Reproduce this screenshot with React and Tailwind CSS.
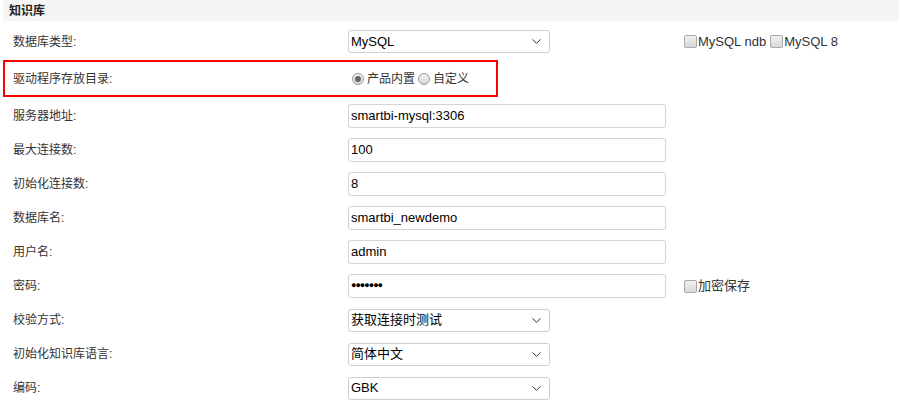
import { ChevronDown } from "lucide-react";

const font = { fontFamily: '"Liberation Sans", "Noto Sans CJK SC", Arial, sans-serif' };

function Select({ value }) {
  return (
    <div className="flex h-[23px] w-[202px] items-center justify-between rounded-[3px] border border-[#cfcfcf] bg-white pl-[2px] pr-[5px] text-[13px] text-black">
      <span>{value}</span>
      <ChevronDown size={15} strokeWidth={1.5} className="text-[#222]" />
    </div>
  );
}

function TextBox({ value }) {
  return (
    <div className="flex h-[24px] w-[318px] items-center rounded-[3px] border border-[#d4d4d4] bg-white pl-[2px] text-[13px] text-black">
      {value}
    </div>
  );
}

function Check({ label }) {
  return (
    <span className="flex items-center text-[13px] text-[#333]">
      <span className="mr-[1px] inline-block h-[13px] w-[13px] rounded-[2px] border border-[#a9a9a9] bg-gradient-to-b from-[#f0f0f0] to-[#d8d8d8]"></span>
      {label}
    </span>
  );
}

function Radio({ checked, label }) {
  return (
    <span className="flex items-center text-[12px] text-[#333]">
      <span className="mr-[3px] flex h-[12px] w-[12px] items-center justify-center rounded-full border border-[#9a9a9a] bg-gradient-to-b from-[#f4f4f4] to-[#d6d6d6]">
        {checked && <span className="h-[6px] w-[6px] rounded-full bg-[#666]"></span>}
      </span>
      {label}
    </span>
  );
}

function Row({ label, children, extra }) {
  return (
    <div className="flex h-[34px] items-center">
      <div className="w-[348px] pl-[13px] text-[12px] text-[#333]">{label}</div>
      <div className="w-[336px]">{children}</div>
      {extra}
    </div>
  );
}

export default function App() {
  return (
    <div className="h-[411px] w-[899px] overflow-hidden bg-white" style={font}>
      <div className="ml-[3px] flex h-[21px] items-center bg-[#f5f5f5] pl-[6px] text-[12px] font-bold text-[#222]">
        知识库
      </div>

      <div className="flex h-[39px] items-center pt-[2px]">
        <div className="w-[348px] pl-[13px] text-[12px] text-[#333]">数据库类型:</div>
        <div className="w-[336px]">
          <Select value="MySQL" />
        </div>
        <div className="flex gap-[4px]">
          <Check label="MySQL ndb" />
          <Check label="MySQL 8" />
        </div>
      </div>

      <div className="ml-[3px] flex h-[37px] w-[495px] items-center border-2 border-[#ff0000]">
        <div className="w-[343px] pl-[8px] text-[12px] text-[#333]">驱动程序存放目录:</div>
        <div className="flex gap-[3px] pl-[4px]">
          <Radio checked label="产品内置" />
          <Radio label="自定义" />
        </div>
      </div>

      <div className="pt-[2px]">
        <Row label="服务器地址:">
          <TextBox value="smartbi-mysql:3306" />
        </Row>
        <Row label="最大连接数:">
          <TextBox value="100" />
        </Row>
        <Row label="初始化连接数:">
          <TextBox value="8" />
        </Row>
        <Row label="数据库名:">
          <TextBox value="smartbi_newdemo" />
        </Row>
        <Row label="用户名:">
          <TextBox value="admin" />
        </Row>
        <Row label="密码:" extra={<Check label="加密保存" />}>
          <TextBox value={<span className="text-[9px] tracking-[-1px]">●●●●●●●</span>} />
        </Row>
        <Row label="校验方式:">
          <Select value="获取连接时测试" />
        </Row>
        <Row label="初始化知识库语言:">
          <Select value="简体中文" />
        </Row>
        <Row label="编码:">
          <Select value="GBK" />
        </Row>
      </div>
    </div>
  );
}
